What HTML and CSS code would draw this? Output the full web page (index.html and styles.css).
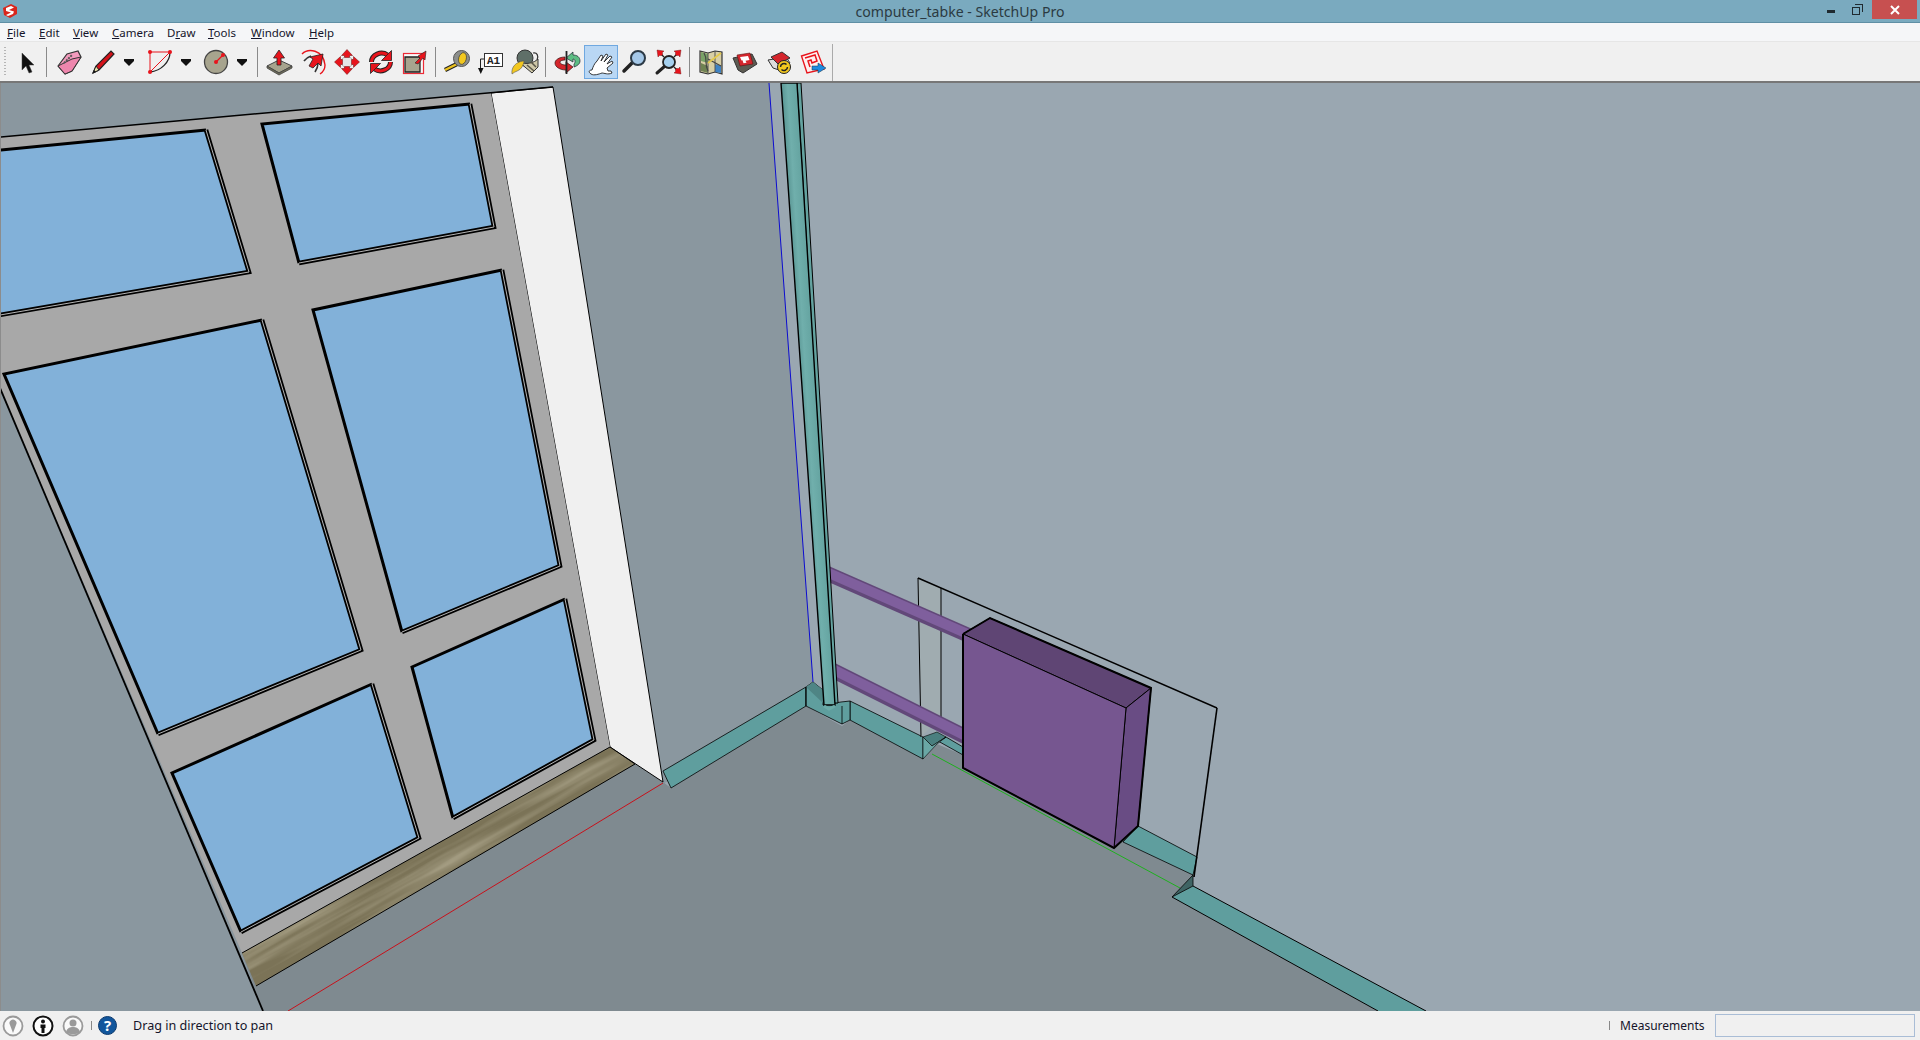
FILE: index.html
```html
<!DOCTYPE html>
<html lang="en">
<head>
<meta charset="utf-8">
<title>computer_tabke - SketchUp Pro</title>
<link rel="stylesheet" href="styles.css">
</head>
<body>
<div class="app">
  <header class="titlebar">
    <svg class="app-logo" viewBox="0 0 16 16" width="16" height="16"><path d="M1 5 9 1l6 3 0 7-7 4-6-3z" fill="#d9261c"/><path d="M4 5l5-2 3 1.500-5 2.500 5 1.500-1 2.500-5 2-2-1 5-2.500-5-1.500z" fill="#fff"/></svg>
    <div class="title">computer_tabke - SketchUp Pro</div>
    <div class="win-controls">
      <span class="win-min"></span>
      <span class="win-restore"><i></i><b></b></span>
      <span class="win-close"><svg viewBox="0 0 10 10" width="10" height="10"><path d="M1 1l8 8M9 1l-8 8" stroke="#fff" stroke-width="2"/></svg></span>
    </div>
  </header>
  <nav class="menubar">
    <span class="m m1"><u>F</u>ile</span>
    <span class="m m2"><u>E</u>dit</span>
    <span class="m m3"><u>V</u>iew</span>
    <span class="m m4"><u>C</u>amera</span>
    <span class="m m5">D<u>r</u>aw</span>
    <span class="m m6"><u>T</u>ools</span>
    <span class="m m7"><u>W</u>indow</span>
    <span class="m m8"><u>H</u>elp</span>
  </nav>
  <div class="toolbar">
    <span class="grip"></span>
    <span class="tool first"><svg viewBox="0 0 34 34"><path d="M12 8v17l4-4 3 7 3-1-3-7h5z" fill="#111" stroke="#444" stroke-width=".5"/></svg></span>
    <span class="sep s1"></span>
    <span class="tool"><svg viewBox="0 0 34 34"><path d="M5 21 14 9l11-3 3 6-9 14-7 3z" fill="#f39bbd" stroke="#333" stroke-width="1.200"/><path d="M5 21l7 8 7-3 9-14-9 2z" fill="#ee86ad" stroke="#333" stroke-width="1"/><path d="M11 18l8-8" stroke="#555" stroke-width="2" stroke-dasharray="2 1"/></svg></span>
    <span class="tool"><svg viewBox="0 0 34 34"><path d="M6 28 9 21 24 6l3 3L12 25z" fill="#d4121a" stroke="#222" stroke-width="1.200"/><path d="M6 28 9 21l3 4z" fill="#e8dfa8" stroke="#222"/><path d="M6 28l1-3 2 2z" fill="#111"/></svg></span>
    <span class="drop"></span>
    <span class="tool gap5"><svg viewBox="0 0 34 34"><path d="M6 7h20L6 27z" fill="none" stroke="#e8141c" stroke-width="1"/><path d="M26 7C26 17 17 26 6 27" fill="none" stroke="#222" stroke-width="1.300"/><circle cx="6" cy="7" r="2" fill="#e8141c"/><circle cx="26" cy="7" r="2" fill="#e8141c"/><circle cx="6" cy="27" r="2" fill="#e8141c"/></svg></span>
    <span class="drop"></span>
    <span class="tool gap4"><svg viewBox="0 0 34 34"><circle cx="16" cy="17" r="11.500" fill="#a7a48e" stroke="#444" stroke-width="1.300"/><path d="M16 17l7-7" stroke="#e8141c" stroke-width="1.300"/><circle cx="16" cy="17" r="2" fill="#e8141c"/><circle cx="23" cy="10" r="2" fill="#e8141c"/></svg></span>
    <span class="drop"></span>
    <span class="sep s2"></span>
    <span class="tool"><svg viewBox="0 0 34 34"><path d="M5 21l12-6 13 6-13 7z" fill="#a7a48e" stroke="#444"/><path d="M5 21v2l12 7 13-7v-2l-13 7z" fill="#6f6d58" stroke="#444" stroke-width=".8"/><path d="M17 5l-5.500 8h3.500v7h4v-7h3.500z" fill="#e8141c" stroke="#222" stroke-width=".8"/></svg></span>
    <span class="tool"><svg viewBox="0 0 34 34"><path d="M6 9C12 3 27 4 29 20c0 4-2 7-5 9" fill="none" stroke="#e8141c" stroke-width="1.400"/><path d="M8 16c2-3 4-4 7-5M19 27c2-3 3-6 3-9" stroke="#333" stroke-width="1.600" fill="none"/><path d="M13 21l4-7-3-2 13-3-2 12-3-3-5 5z" fill="#e8141c" stroke="#222" stroke-width=".8"/></svg></span>
    <span class="tool"><svg viewBox="0 0 34 34"><rect x="11.500" y="11.500" width="11" height="11" fill="#e4e6e6" stroke="#9a9a9a" stroke-width=".7" transform="rotate(45 17 17)"/><path d="M17 4.500l5.500 6h-3v2h-5v-2h-3z" fill="#e8141c" stroke="#6a1010" stroke-width=".5"/><path d="M29.500 17l-6 5.500v-3h-2v-5h2v-3z" fill="#e8141c" stroke="#6a1010" stroke-width=".5"/><path d="M17 29.500l-5.500-6h3v-2h5v2h3z" fill="#e8141c" stroke="#6a1010" stroke-width=".5"/><path d="M4.500 17l6-5.500v3h2v5h-2v3z" fill="#e8141c" stroke="#6a1010" stroke-width=".5"/></svg></span>
    <span class="tool"><svg viewBox="0 0 34 34"><path d="M7.500 17a10 9 0 0 1 16-7" fill="none" stroke="#222" stroke-width="5"/><path d="M7.500 17a10 9 0 0 1 16-7" fill="none" stroke="#e8141c" stroke-width="3"/><path d="M27.500 5.500v10h-10z" fill="#e8141c" stroke="#222" stroke-width=".8"/><path d="M26.500 17a10 9 0 0 1-16 7" fill="none" stroke="#222" stroke-width="5"/><path d="M26.500 17a10 9 0 0 1-16 7" fill="none" stroke="#e8141c" stroke-width="3"/><path d="M6.500 28.500v-10h10z" fill="#e8141c" stroke="#222" stroke-width=".8"/></svg></span>
    <span class="tool"><svg viewBox="0 0 34 34"><rect x="5.500" y="8.500" width="20" height="20" fill="#fafafa" stroke="#ec2a36" stroke-width="1.200"/><path d="M7 12h15v15H7z" fill="#a7a48e" stroke="#222" stroke-width="1.300"/><path d="M17 18l5-5-2-2 8-5-1 9-2-2-5 6z" fill="#e8141c" stroke="#222" stroke-width=".6"/></svg></span>
    <span class="sep s3"></span>
    <span class="tool"><svg viewBox="0 0 34 34"><path d="M5 25l12-6" stroke="#222" stroke-width="4.500"/><path d="M5 25l12-6" stroke="#ecc21f" stroke-width="2.500"/><circle cx="21.500" cy="13.500" r="8" fill="#8d8f8c" stroke="#555"/><ellipse cx="22.500" cy="13.500" rx="3.800" ry="6" fill="#f3c81f" stroke="#333" stroke-width=".6" transform="rotate(15 22.500 13.500)"/></svg></span>
    <span class="tool"><svg viewBox="0 0 34 34"><rect x="10.500" y="8.500" width="18" height="13" fill="#fff" stroke="#333"/><text class="a1" x="19.500" y="18.800" text-anchor="middle">A1</text><path d="M10 14H6.500v10" fill="none" stroke="#222"/><path d="M4 23h5.500l-2.700 6z" fill="#111"/></svg></span>
    <span class="tool"><svg viewBox="0 0 34 34"><circle cx="17" cy="13" r="8" fill="#5f6f68" stroke="#333"/><path d="M11 17l13 11 6-6v-8c-4 4-12 6-19 3z" fill="#cfc8a8" stroke="#333"/><path d="M19 20l7 6M23 17l5 5" stroke="#5a5648" stroke-width="1.500"/><path d="M15 16C8 17 3 22 4 29c3-3 8-3 10-7 1-2 2-4 2-6z" fill="#f3c81f" stroke="#555" stroke-width=".6"/><path d="M25 8c4-1 6 3 4 7" fill="none" stroke="#333" stroke-width="1.200"/></svg></span>
    <span class="sep s3"></span>
    <span class="tool"><svg viewBox="0 0 34 34"><path d="M16 13l7-6v3c4 0 7 2 7 6 0 3-3 5-6 6v-3c1-1 1-2 1-3 0-1-1-2-2-2v3z" fill="#5dbd84" stroke="#223" stroke-width=".7"/><path d="M15 12c-6 0-10 3-10 6 0 4 5 7 11 7v3l7-6-7-5v3c-3 0-6-1-6-3 0-1 2-2 5-2z" fill="#d4252c" stroke="#311" stroke-width=".7"/><path d="M16.500 6v23" stroke="#222" stroke-width="1.800"/></svg></span>
    <span class="tool active"><svg viewBox="0 0 34 34"><path d="M7 29c-3-2-2-4 1-4 1-3 2-6 5-9l4-6 2 1-2 5 5-7 2 1-4 7 6-6 2 1-5 7 5-3 1 2-6 5 1 3h3l1 2c-4 2-8 0-10 0-3 1-8 3-11 1z" fill="#fff" stroke="#222" stroke-width=".9"/></svg></span>
    <span class="tool"><svg viewBox="0 0 34 34"><path d="M6 26l8-8" stroke="#222" stroke-width="3.500" stroke-linecap="round"/><circle cx="20" cy="13" r="7" fill="#a5c8e8" stroke="#2c3a46" stroke-width="2"/></svg></span>
    <span class="tool"><svg viewBox="0 0 34 34"><path d="M5 28l8-7" stroke="#222" stroke-width="3" stroke-linecap="round"/><circle cx="17" cy="17" r="6" fill="#a5d0ee" stroke="#222" stroke-width="1.800"/><path d="M12 12l-4-4M22 12l4-4M22 22l4 4" stroke="#222" stroke-width="1.300"/><path d="M5 5l7 1-2 2 1 1-2 2-1-1-2 2zM29 5l-1 7-2-2-1 1-2-2 1-1-2-2zM29 29l-7-1 2-2-1-1 2-2 1 1 2-2z" fill="#e8141c" stroke="#611" stroke-width=".4"/></svg></span>
    <span class="sep s3"></span>
    <span class="tool"><svg viewBox="0 0 34 34"><path d="M6 6l8 2 7-2 7 1v22l-7-2-7 2-8-2z" fill="#d8cfa6" stroke="#333" stroke-width="1.200"/><path d="M7 7l7 2v9l-7-2z" fill="#79a267"/><path d="M21 27l6 1v-7l-6-2z" fill="#3f83c4"/><path d="M7 26l7 2v-7l-7-3z" fill="#6f8252"/><path d="M14 8v21M21 6v21" stroke="#555"/><path d="M10 8c4 6 0 11 4 18M27 21l-13-7" stroke="#444" fill="none" stroke-width="1.200"/><path d="M27 8l-13 10" stroke="#e4c94a" stroke-width="1.600"/></svg></span>
    <span class="tool"><svg viewBox="0 0 34 34"><path d="M5 13l5 12 5 3 14-9-5-10z" fill="#5d5b52" stroke="#333"/><path d="M9 10l13-2 3 11-13 2z" fill="#d4252c" stroke="#5a1212" stroke-width=".6"/><path d="M12 12l8-1 1.500 4-4 .8 1 2-3 .5-1-3-1 .2z" fill="#fff"/></svg></span>
    <span class="tool"><svg viewBox="0 0 34 34"><path d="M6 15l5 8 9 3 8-8-4-6z" fill="#dcdcdc" stroke="#333"/><path d="M9 12l11-5 8 6-12 6z" fill="#d4252c" stroke="#333"/><circle cx="22" cy="22" r="6.500" fill="#f3c81f" stroke="#222"/><path d="M18.500 22a3.500 3.500 0 0 1 6-2.500M25.500 22a3.500 3.500 0 0 1-6 2.500" stroke="#222" fill="none" stroke-width="1.500"/></svg></span>
    <span class="tool"><svg viewBox="0 0 34 34"><path d="M5.500 11 21 6l7 18-17 4z" fill="#fdf0f0" stroke="#e8141c" stroke-width="1.400"/><path d="M9 13l10-3 2 6-5 2-1-3-3 1 2 6" fill="none" stroke="#e8141c" stroke-width="1.500"/><path d="M16 21h6v-3l8 5-8 5v-3h-6z" fill="#1d8ae0" stroke="#134" stroke-width=".5"/></svg></span>
    <span class="sep s4"></span>
  </div>
  <main class="canvas">
    <svg class="scene" viewBox="0 83 1920 928" width="1920" height="928">
      <defs>
        <linearGradient id="col" gradientUnits="userSpaceOnUse" x1="781" y1="83" x2="797" y2="82">
          <stop offset="0" stop-color="#5a9694"/><stop offset=".4" stop-color="#70afac"/><stop offset="1" stop-color="#64a3a0"/>
        </linearGradient>
        <filter id="wood" x="0" y="0" width="100%" height="100%">
          <feTurbulence type="fractalNoise" baseFrequency="0.006 0.12" numOctaves="3" seed="4"/>
          <feColorMatrix values="0 0 0 0 .57  0 0 0 0 .53  0 0 0 0 .39  1.100 0 0 0 -.42"/>
        </filter>
        <clipPath id="sill"><polygon points="610,747 635,764 256,986 242,953"/></clipPath>
      </defs>
      <rect x="0" y="83" width="1920" height="928" fill="#9aa7b1"/>
      <polygon points="0,83 769,83 813,682 806,690 670,780 263,1011 0,1011" fill="#8a979f"/>
      <polygon points="263,1011 242,953 635,764 663,782 671,788 806,706 842,726 850,720 923,759 937,744 963,755 1123,842 1193,875 1172,897 1378,1011" fill="#7f8a90"/>

      <polygon points="491,93 553,87 663,782 610,747" fill="#f0f0f0" stroke="#000"/>
      <polygon points="0,137 491,93 610,747 242,953 0,388" fill="#a8a8a8"/>
      <path d="M0 137 553 87" stroke="#000" stroke-width="1.500"/>
      <path d="M0 388 263 1011" stroke="#000" stroke-width="1.800"/>
      <polygon points="610,747 635,764 256,986 242,953" fill="#7b7357"/>
      <g clip-path="url(#sill)"><g transform="rotate(-29 430 860)"><rect x="180" y="800" width="520" height="120" filter="url(#wood)"/></g></g>
      <path d="M242 953 610 747 635 764 256 986" fill="none" stroke="#000"/>

      <g class="panes">
        <polygon points="0,150 206,130 249,272 0,315" fill="#82b1d9"/>
        <polygon points="262,124 470,104 494,227 299,263" fill="#82b1d9"/>
        <polygon points="4,374 262,320 361,650 158,734" fill="#82b1d9"/>
        <polygon points="313,310 502,270 560,566 402,632" fill="#82b1d9"/>
        <polygon points="172,773 372,684 419,838 241,932" fill="#82b1d9"/>
        <polygon points="412,667 565,599 594,740 453,818" fill="#82b1d9"/>
      </g>
      <g class="edge-thick">
        <path d="M0 150 206 130"/><path d="M299 263 262 124 470 104"/>
        <path d="M158 734 4 374 262 320"/><path d="M402 632 313 310 502 270"/>
        <path d="M241 932 172 773 372 684"/><path d="M453 818 412 667 565 599"/>
      </g>
      <g class="edge-double">
        <path d="M206 130 249 272 0 315"/><path d="M470 104 494 227 299 263"/>
        <path d="M262 320 361 650 158 734"/><path d="M502 270 560 566 402 632"/>
        <path d="M372 684 419 838 241 932"/><path d="M565 599 594 740 453 818"/>
      </g>
      <g class="edge-inner">
        <path d="M206 130 249 272 0 315"/><path d="M470 104 494 227 299 263"/>
        <path d="M262 320 361 650 158 734"/><path d="M502 270 560 566 402 632"/>
        <path d="M372 684 419 838 241 932"/><path d="M565 599 594 740 453 818"/>
      </g>

      <path d="M663 783 288 1011" stroke="#c8101a" stroke-width="1"/>
      <path d="M769 83 813 682" stroke="#0c0cd0" stroke-width="1"/>

      <polygon points="663,771 806,687 806,706 671,788" fill="#5f9e9e" stroke="#000" stroke-width=".8"/>
      <polygon points="850,701 923,737 923,759 850,720" fill="#5f9e9e" stroke="#000" stroke-width=".8"/>
      <polygon points="946,737 963,747 963,755 938,741" fill="#5f9e9e" stroke="#000" stroke-width=".8"/>
      <polygon points="1123,842 1138,826 1197,857 1193,875" fill="#5f9e9e" stroke="#000" stroke-width=".8"/>
      <polygon points="1172,897 1193,886 1426,1011 1378,1011" fill="#5f9e9e"/>
      <path d="M1193 886 1426 1011M1172 897 1378 1011" stroke="#000"/>
      <polygon points="806,687 813,682 823,690 823,705 841,702 850,701 850,720 842,724 806,706" fill="#5f9e9e" stroke="#000" stroke-width=".8"/>
      <polygon points="806,687 813,682 823,690 823,703" fill="#4f8585"/>
      <path d="M842 706V724M806 687 806 706" stroke="#000" stroke-width=".8"/>
      <polygon points="923,737 937,732 946,737 932,746" fill="#4a7f7f" stroke="#000" stroke-width=".6"/>
      <polygon points="923,759 923,737 932,746 946,737 937,744" fill="#6aa7a5" stroke="#000" stroke-width=".6"/>
      <path d="M932 754 1180 888" stroke="#1eb01e" stroke-width="1"/>

      <polygon points="918,578 941,588 941,717 921,737" fill="#a0acb0"/>
      <path d="M918 578 921 737M941 588 941 717" stroke="#000" stroke-width="1"/>
      <path d="M918 578 1217 708" stroke="#000" stroke-width="1.400"/>
      <path d="M1217 708 1194 877" stroke="#000" stroke-width="1.600"/>

      <g class="pipe">
        <path d="M824 572 970 636" stroke="#624879" stroke-width="15"/>
        <path d="M824 571 970 635" stroke="#7f5f9d" stroke-width="10"/>
        <path d="M830 669 966 737" stroke="#624879" stroke-width="15"/>
        <path d="M830 668 966 736" stroke="#7f5f9d" stroke-width="10"/>
      </g>

      <polygon points="797,83 801,83 838,703 834,703" fill="#64a3a0" stroke="#000" stroke-width="1"/>
      <polygon points="781,83 797,83 835,705 824,705" fill="url(#col)" stroke="#000" stroke-width="1.400"/>
      <path d="M824 706 829 709 835 706" fill="none" stroke="#6caba8" stroke-width="3"/>

      <polygon points="963,634 990,618 1151,688 1126,708" fill="#5f4574" stroke="#000" stroke-width="1"/>
      <polygon points="1126,708 1151,688 1138,826 1114,848" fill="#694c84" stroke="#000" stroke-width="1"/>
      <polygon points="963,634 1126,708 1114,848 963,768" fill="#765690" stroke="#000" stroke-width="1"/>
      <path d="M963 634V768L1114 848 1138 826 1151 688 990 618 963 634" fill="none" stroke="#000" stroke-width="2"/>

      <polygon points="1193,875 1172,897 1193,886" fill="#3f6464" stroke="#000" stroke-width=".8"/>
    </svg>
  </main>
  <footer class="status">
    <svg class="st st-geo" viewBox="0 0 22 22"><circle cx="11" cy="11" r="9.500" fill="#fafafa" stroke="#9a9a9a" stroke-width="1.800"/><path d="M11 18 8 10a3.500 3.500 0 1 1 6 0z" fill="#9a9a9a"/></svg>
    <svg class="st" viewBox="0 0 22 22"><circle cx="11" cy="11" r="9.500" fill="#fff" stroke="#111" stroke-width="2"/><circle cx="11" cy="6.500" r="2" fill="#111"/><path d="M8.500 9.500h5V13h-1v5h-3v-5h-1z" fill="#111"/></svg>
    <svg class="st" viewBox="0 0 22 22"><circle cx="11" cy="11" r="9.500" fill="#fafafa" stroke="#9a9a9a" stroke-width="1.800"/><circle cx="11" cy="8" r="3.500" fill="#9a9a9a"/><path d="M4 17c1-4 4-5 7-5s6 1 7 5c-2 3-12 3-14 0z" fill="#9a9a9a"/></svg>
    <span class="st-sep"></span>
    <span class="help">?</span>
    <span class="hint">Drag in direction to pan</span>
    <span class="st-sep right"></span>
    <span class="meas-label">Measurements</span>
    <span class="meas-box"></span>
  </footer>
</div>
</body>
</html>
```
FILE: styles.css
```css
* { box-sizing: border-box; }
html, body { margin: 0; padding: 0; overflow: hidden; }
body { font-family: "Noto Sans", "Open Sans", sans-serif; font-size: 12px; color: #1a1a2a; }
.app { width: 1920px; height: 1040px; display: flex; flex-direction: column; background: #f0f0f0; }

.titlebar { height: 23px; flex: none; background: #7aaabf; border-bottom: 1px solid #5f8fa5; display: flex; position: relative; align-items: flex-start; }
.app-logo { margin: 3px 0 0 2px; }
.title { position: absolute; left: 0; right: 0; top: 2px; text-align: center; font-size: 14.1px; line-height: 20px; color: #2b3a42; }
.win-controls { margin-left: auto; display: flex; align-items: flex-start; position: relative; }
.win-min { width: 8px; height: 3px; background: #1f2a30; margin: 10px 0 0 0; }
.win-restore { width: 11px; height: 11px; margin: 4px 9px 0 17px; position: relative; }
.win-restore i { position: absolute; left: 3px; top: 0; width: 8px; height: 8px; border: 1px solid #1f2a30; border-left: 0; border-bottom: 0; }
.win-restore b { position: absolute; left: 0; top: 3px; width: 8px; height: 8px; border: 1px solid #1f2a30; }
.win-close { width: 45px; height: 19px; background: #c75050; margin-right: 3px; display: flex; align-items: center; justify-content: center; }

.menubar { height: 19px; flex: none; background: #f5f6f8; border-bottom: 1px solid #e6e6e6; display: flex; align-items: center; line-height: 17px; color: #14142a; font-size: 11.5px; }
.m { display: block; }
.m1 { margin-left: 7px; width: 32px; }
.m2 { width: 34px; }
.m3 { width: 39px; }
.m4 { width: 55px; }
.m5 { width: 41px; }
.m6 { width: 43px; }
.m7 { width: 58px; }

.toolbar { height: 41px; flex: none; background: #f0f0f0; border-bottom: 2px solid #777; display: flex; align-items: flex-start; position: relative; padding-top: 3px; }
.grip { position: absolute; left: 4px; top: 5px; width: 2px; height: 28px; background: repeating-linear-gradient(#b5b5b5 0 1px, transparent 1px 3px); }
.tool { width: 34px; height: 34px; flex: none; display: block; }
.tool svg { display: block; width: 34px; height: 34px; }
.tool.first { margin-left: 10px; }
.tool.active { background: #b9d7f4; border: 1px solid #6fa8e0; }
.tool.active svg { margin: -1px; }
.gap5 { margin-left: 5px; }
.gap4 { margin-left: 4px; }
.drop { width: 18px; height: 34px; flex: none; position: relative; }
.drop::before { content: ""; position: absolute; left: 3px; top: 14px; width: 10px; height: 2px; background: #111; }
.drop::after { content: ""; position: absolute; left: 3px; top: 16px; border: 5px solid transparent; border-top-color: #111; border-bottom: 0; }
.sep { width: 1px; height: 30px; margin-top: 2px; background: #8a8a8a; flex: none; }
.s1 { margin-left: 2px; margin-right: 6px; }
.s2 { margin-left: 5px; margin-right: 4px; }
.s3 { margin-left: 3px; margin-right: 4px; }
.s4 { margin-left: 2px; margin-top: -1px; height: 37px; background: #aaa; }
.a1 { font-family: "Liberation Mono", monospace; font-size: 11px; font-weight: 700; fill: #222; }

.canvas { flex: 1; min-height: 0; overflow: hidden; background: #9aa7b1; border-left: 1px solid #8c8c8c; }
.scene { display: block; margin-left: -1px; }
.edge-thick path { fill: none; stroke: #000; stroke-width: 3; }
.edge-double path { fill: none; stroke: #000; stroke-width: 4.500; }
.edge-inner path { fill: none; stroke: #b5b5b5; stroke-width: 1; }
.pipe path { fill: none; }

.status { height: 29px; flex: none; background: #f0f0f0; display: flex; align-items: center; padding-left: 2px; }
.st { width: 22px; height: 22px; margin-right: 8px; flex: none; }
.st-sep { width: 1px; height: 9px; background: #888; margin: 0 6px 0 -1px; flex: none; }
.st-sep.right { margin: 0 10px 0 auto; }
.help { width: 19px; height: 19px; border-radius: 50%; background: #12569c; border: 1px solid #0d3a6e; color: #fff; font-size: 15px; font-weight: 700; text-align: center; line-height: 17px; flex: none; }
.hint { margin-left: 16px; font-size: 12.6px; color: #14142a; }
.meas-label { font-size: 12px; color: #14142a; width: 95px; }
.meas-box { width: 200px; height: 23px; border: 1px solid #a9bdd6; background: #f0f0f0; margin-right: 5px; flex: none; }
```
